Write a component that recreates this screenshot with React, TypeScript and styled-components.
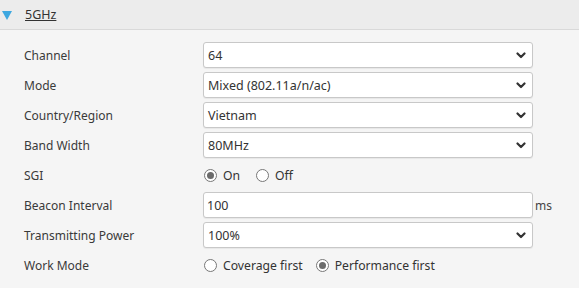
import styled, { createGlobalStyle } from "styled-components";

const GlobalStyle = createGlobalStyle`
  html, body {
    margin: 0;
    background: #f5f5f5;
  }
  body {
    font-family: "Noto Sans", "Open Sans", Arial, sans-serif;
    font-size: 12px;
    color: #333;
  }
`;

type Field =
  | { label: string; kind: "select"; value: string }
  | { label: string; kind: "input"; value: string; unit?: string }
  | { label: string; kind: "radio"; options: string[]; checked: number; gap: number };

const fields: Field[] = [
  { label: "Channel", kind: "select", value: "64" },
  { label: "Mode", kind: "select", value: "Mixed (802.11a/n/ac)" },
  { label: "Country/Region", kind: "select", value: "Vietnam" },
  { label: "Band Width", kind: "select", value: "80MHz" },
  { label: "SGI", kind: "radio", options: ["On", "Off"], checked: 0, gap: 16 },
  { label: "Beacon Interval", kind: "input", value: "100", unit: "ms" },
  { label: "Transmitting Power", kind: "select", value: "100%" },
  {
    label: "Work Mode",
    kind: "radio",
    options: ["Coverage first", "Performance first"],
    checked: 1,
    gap: 13,
  },
];

const Chevron = () => (
  <svg width="10" height="7" viewBox="0 0 10 7">
    <polyline
      points="1.5,1.5 5,5 8.5,1.5"
      fill="none"
      stroke="#333"
      strokeWidth="2.2"
      strokeLinecap="round"
      strokeLinejoin="round"
    />
  </svg>
);

const App = () => {
  return (
    <>
      <GlobalStyle />
      <Section>
        <Header>
          <Triangle />
          <Title>5GHz</Title>
        </Header>
        <Body>
          {fields.map((f) => (
            <Row key={f.label}>
              <Label>{f.label}</Label>
              {f.kind === "select" && (
                <Box>
                  <BoxText>{f.value}</BoxText>
                  <Chevron />
                </Box>
              )}
              {f.kind === "input" && (
                <InputWrap>
                  <Box>
                    <BoxText $tight>{f.value}</BoxText>
                  </Box>
                  <Unit>{f.unit}</Unit>
                </InputWrap>
              )}
              {f.kind === "radio" && (
                <RadioGroup $gap={f.gap}>
                  {f.options.map((o, i) => (
                    <RadioOption key={o}>
                      <RadioDot $checked={i === f.checked} />
                      {o}
                    </RadioOption>
                  ))}
                </RadioGroup>
              )}
            </Row>
          ))}
        </Body>
      </Section>
    </>
  );
};

const Section = styled.div`
  width: 579px;
  height: 288px;
  background: #f5f5f5;
`;

const Header = styled.div`
  height: 29px;
  display: flex;
  align-items: center;
  background: #ececec;
  border-bottom: 1px solid #d9d9d9;
  padding-left: 2px;
`;

const Triangle = styled.span`
  width: 0;
  height: 0;
  border-left: 5px solid transparent;
  border-right: 5px solid transparent;
  border-top: 9px solid #3ea8e0;
  margin-top: 1px;
`;

const Title = styled.span`
  margin-left: 13px;
  text-decoration: underline;
  color: #333;
  font-size: 12.5px;
`;

const Body = styled.div`
  padding-top: 10px;
`;

const Row = styled.div`
  display: grid;
  grid-template-columns: 203px auto;
  align-items: center;
  height: 30px;
`;

const Label = styled.div`
  padding-left: 24px;
  color: #3a3a3a;
`;

const Box = styled.div`
  box-sizing: border-box;
  flex-shrink: 0;
  height: 26px;
  width: 330px;
  display: flex;
  align-items: center;
  justify-content: space-between;
  padding: 0 6px 0 4px;
  background: #fff;
  border: 1px solid #c8c8c8;
  border-radius: 3px;
  box-shadow: 0 1px 1px rgba(0, 0, 0, 0.06);
  font-size: 12.5px;
`;

const BoxText = styled.span<{ $tight?: boolean }>`
  color: #333;
  margin-left: ${(p) => (p.$tight ? "-1px" : "0")};
`;

const InputWrap = styled.div`
  display: flex;
  align-items: center;
`;

const Unit = styled.span`
  margin-left: 2px;
  color: #444;
`;

const RadioGroup = styled.div<{ $gap: number }>`
  display: flex;
  align-items: center;
  gap: ${(p) => p.$gap}px;
  padding-left: 1px;
`;

const RadioOption = styled.label`
  display: flex;
  align-items: center;
  gap: 6px;
  color: #333;
  font-size: 12.2px;
`;

const RadioDot = styled.span<{ $checked: boolean }>`
  box-sizing: border-box;
  width: 13px;
  height: 13px;
  border-radius: 50%;
  border: 1px solid #777;
  background: #fff;
  display: flex;
  align-items: center;
  justify-content: center;
  &::after {
    content: "";
    width: 7px;
    height: 7px;
    border-radius: 50%;
    background: ${(p) => (p.$checked ? "#6b6b6b" : "transparent")};
  }
`;

export default App;
